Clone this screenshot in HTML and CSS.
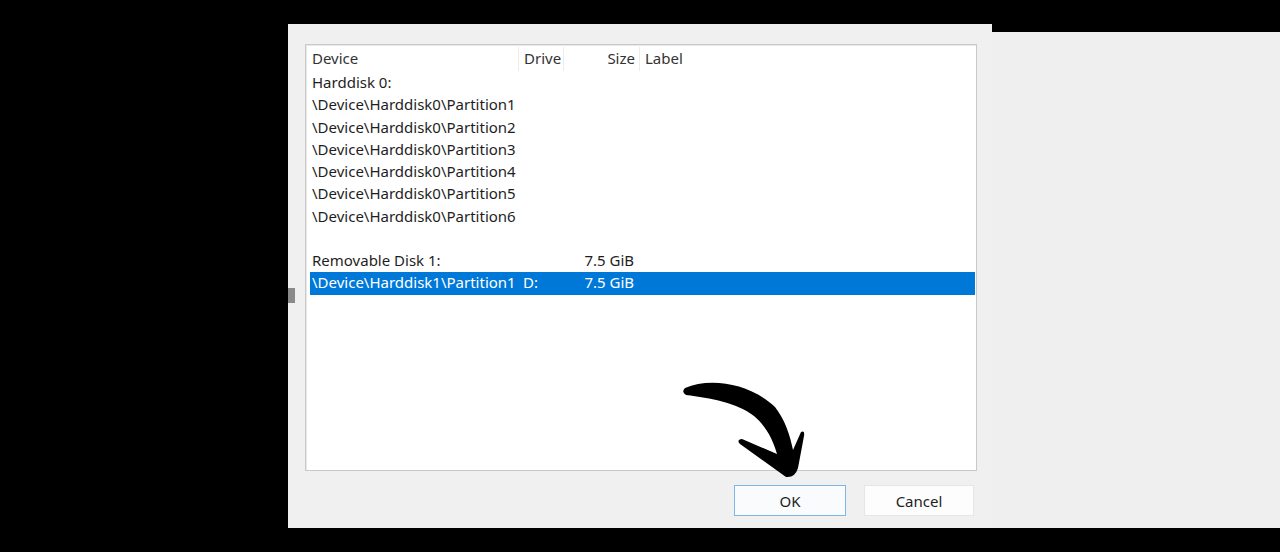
FILE: index.html
```html
<!DOCTYPE html>
<html>
<head>
<meta charset="utf-8">
<link rel="stylesheet" href="styles.css">
</head>
<body>
<div class="screen">
  <div class="dialog">
    <span class="grip"></span>
    <div class="listbox">
      <div class="row header">
        <span class="c-dev">Device</span>
        <span class="c-drv">Drive</span>
        <span class="c-size">Size</span>
        <span class="c-lbl">Label</span>
      </div>
      <div class="row"><span class="c-dev">Harddisk 0:</span><span class="c-drv"></span><span class="c-size"></span><span class="c-lbl"></span></div>
      <div class="row"><span class="c-dev">\Device\Harddisk0\Partition1</span><span class="c-drv"></span><span class="c-size"></span><span class="c-lbl"></span></div>
      <div class="row"><span class="c-dev">\Device\Harddisk0\Partition2</span><span class="c-drv"></span><span class="c-size"></span><span class="c-lbl"></span></div>
      <div class="row"><span class="c-dev">\Device\Harddisk0\Partition3</span><span class="c-drv"></span><span class="c-size"></span><span class="c-lbl"></span></div>
      <div class="row"><span class="c-dev">\Device\Harddisk0\Partition4</span><span class="c-drv"></span><span class="c-size"></span><span class="c-lbl"></span></div>
      <div class="row"><span class="c-dev">\Device\Harddisk0\Partition5</span><span class="c-drv"></span><span class="c-size"></span><span class="c-lbl"></span></div>
      <div class="row"><span class="c-dev">\Device\Harddisk0\Partition6</span><span class="c-drv"></span><span class="c-size"></span><span class="c-lbl"></span></div>
      <div class="row"></div>
      <div class="row"><span class="c-dev">Removable Disk 1:</span><span class="c-drv"></span><span class="c-size">7.5 GiB</span><span class="c-lbl"></span></div>
      <div class="row selected"><span class="c-dev">\Device\Harddisk1\Partition1</span><span class="c-drv">D:</span><span class="c-size">7.5 GiB</span><span class="c-lbl"></span></div>
    </div>
    <div class="buttons">
      <button class="btn btn-default">OK</button>
      <button class="btn">Cancel</button>
    </div>
    <svg class="pointer" width="130" height="100" viewBox="0 0 130 100">
      <path d="M5,8 C30,-3 70,3 95,27 C105,40 110,55 113,70 L121,52 Q125,50 124,56 L118,88 Q115,98 106,97 L60,64 Q56,60 62,59 L97,74 C93,60 86,46 74,36 C58,23 30,18 6,15 Q1,12 5,8 Z" fill="#000"/>
    </svg>
  </div>
  <div class="side"></div>
</div>
</body>
</html>
```

FILE: styles.css
```css
html, body {
  margin: 0;
  padding: 0;
  background: #000;
  width: 1280px;
  height: 552px;
  overflow: hidden;
}
.screen {
  display: flex;
  padding: 24px 0 0 288px;
  height: 504px;
}
.dialog {
  position: relative;
  width: 704px;
  height: 504px;
  background: #f0f0f0;
  padding: 20px 15px 0 17px;
  box-sizing: border-box;
  font-family: "Noto Sans", "Open Sans", sans-serif;
  font-size: 15px;
  color: #1e1e1e;
}
.side {
  flex: 1;
  margin-top: 8px;
  height: 496px;
  background: #efefef;
}
.grip {
  position: absolute;
  left: 0;
  top: 264px;
  width: 7px;
  height: 15px;
  background: #8a8a8a;
}
.listbox {
  height: 427px;
  box-sizing: border-box;
  background: #fff;
  border: 1px solid #c9c9c9;
  box-shadow: inset 1px 1px 0 #e8e8e8;
  padding: 2px 1px 0 4px;
}
.row {
  display: flex;
  height: 22.25px;
  line-height: 20px;
  white-space: nowrap;
}
.row.header {
  height: 24px;
  line-height: 22px;
  color: #333;
  margin-left: -4px;
  padding-left: 4px;
  margin-bottom: 1px;
}
.c-dev {
  width: 208px;
  padding-left: 2px;
  box-sizing: border-box;
  overflow: hidden;
}
.c-drv {
  width: 45px;
  padding-left: 5px;
  box-sizing: border-box;
}
.c-size {
  width: 75px;
  padding-right: 4px;
  text-align: right;
  box-sizing: border-box;
}
.c-lbl {
  flex: 1;
  padding-left: 5px;
}
.header .c-dev,
.header .c-drv,
.header .c-size {
  border-right: 1px solid #ececec;
}
.header .c-dev { width: 209px; }
.header .c-drv { width: 45px; }
.header .c-size { width: 76px; }
.row.selected {
  background: #0078d7;
  color: #fff;
}
.buttons {
  display: flex;
  justify-content: flex-end;
  gap: 18px;
  margin-top: 14px;
  padding-right: 3px;
}
.btn {
  width: 112px;
  height: 31px;
  font-family: "Noto Sans", "Open Sans", sans-serif;
  font-size: 15px;
  color: #1e1e1e;
  background: #fdfdfd;
  border: 1px solid #e6e6e6;
  padding: 0;
}
.btn-default {
  border: 1px solid #7fb6e8;
  background: #f9fbfd;
}
.btn + .btn {
  width: 110px;
}
.pointer {
  position: absolute;
  left: 392px;
  top: 356px;
}
```
